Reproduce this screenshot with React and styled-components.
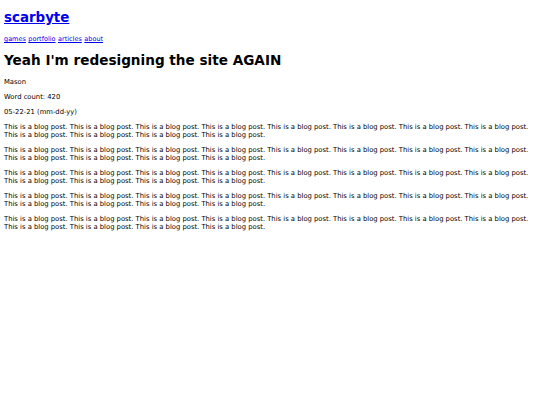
import React from 'react';
import styled, { createGlobalStyle } from 'styled-components';

const GlobalStyle = createGlobalStyle`
  html, body {
    margin: 0;
    background: #fff;
  }
  body {
    padding: 4px;
    font-family: 'DejaVu Sans', Verdana, sans-serif;
    color: #000;
  }
`;

const Header = styled.header`
  display: flex;
  flex-direction: column;
`;

const SiteTitle = styled.h1`
  font-size: 13.4px;
  margin: 6px 0 10px;
  a {
    color: #0000ee;
  }
`;

const Nav = styled.nav`
  display: flex;
  gap: 2.5px;
  font-size: 6.5px;
  a {
    color: #0000ee;
  }
`;

const PostTitle = styled.h2`
  font-size: 13.6px;
  margin: 9px 0 10px;
`;

const Para = styled.p`
  font-size: 6.8px;
  margin: 7px 0;
`;

const navLinks = ['games', 'portfolio', 'articles', 'about'];

const body = Array(12).fill('This is a blog post.').join(' ');

const App = () => {
  return (
    <>
      <GlobalStyle />
      <Header>
        <SiteTitle>
          <a href="#">scarbyte</a>
        </SiteTitle>
        <Nav>
          {navLinks.map((link) => (
            <a key={link} href="#">
              {link}
            </a>
          ))}
        </Nav>
      </Header>
      <main>
        <PostTitle>Yeah I'm redesigning the site AGAIN</PostTitle>
        <Para>Mason</Para>
        <Para>Word count: 420</Para>
        <Para>05-22-21 (mm-dd-yy)</Para>
        {[0, 1, 2, 3, 4].map((i) => (
          <Para key={i}>{body}</Para>
        ))}
      </main>
    </>
  );
};

export default App;
